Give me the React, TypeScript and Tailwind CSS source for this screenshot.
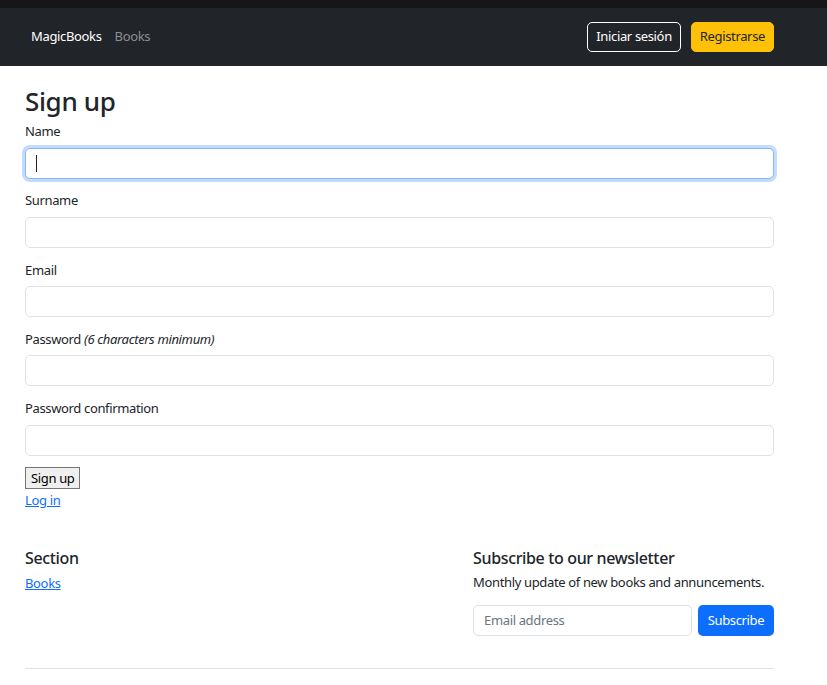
import React from 'react';

const font = { fontFamily: '"Noto Sans", "Open Sans", sans-serif' };

function Field({ label, hint, focused }: { label: string; hint?: string; focused?: boolean }) {
  return (
    <div className="mb-[12.8px]">
      <label className="mb-[6px] block text-[13px] leading-[19.5px] text-[#212529]">
        {label}
        {hint && <em className="italic"> {hint}</em>}
      </label>
      <div
        className={
          focused
            ? 'flex h-[31px] items-center rounded-[5px] border border-[#86b7fe] bg-white px-[10px] shadow-[0_0_0_3px_rgba(13,110,253,0.25)]'
            : 'h-[31px] rounded-[5px] border border-[#dee2e6] bg-white'
        }
      >
        {focused && <span className="h-[17px] w-px bg-[#212529]" />}
      </div>
    </div>
  );
}

export default function App() {
  return (
    <div className="min-h-screen bg-white tracking-[-0.35px]" style={font}>
      <div className="h-2 bg-[#161616]" />
      <nav className="flex h-[58px] items-center justify-between bg-[#212529] pl-[31px] pr-[53px]">
        <div className="flex items-center gap-[13px] text-[13px]">
          <span className="text-white">MagicBooks</span>
          <span className="text-[#8c8e91]">Books</span>
        </div>
        <div className="flex items-center gap-[10px] text-[13px]">
          <button className="h-[30px] rounded-[5px] border border-white px-[8px] text-white">Iniciar sesión</button>
          <button className="h-[30px] rounded-[5px] border border-[#ffc107] bg-[#ffc107] px-[8px] text-[#212529]">
            Registrarse
          </button>
        </div>
      </nav>

      <main className="mx-[25px] w-[749px]">
        <h2 className="mb-[5px] mt-[20px] text-[26px] font-medium leading-[31px] text-[#212529]">Sign up</h2>
        <Field label="Name" focused />
        <Field label="Surname" />
        <Field label="Email" />
        <Field label="Password" hint="(6 characters minimum)" />
        <Field label="Password confirmation" />
        <button className="-mt-px block h-[22px] border border-[#767676] bg-[#efefef] px-[5px] text-[13px] leading-[20px] text-black">
          Sign up
        </button>
        <div className="-mt-[2px]">
          <a href="#" className="text-[13px] leading-[20px] text-[#0d6efd] underline">
            Log in
          </a>
        </div>

        <footer className="mt-[37px]">
          <div className="flex">
            <div className="w-[448px]">
              <h5 className="mb-[2px] text-[16px] font-medium leading-[20px] text-[#212529]">Section</h5>
              <a href="#" className="text-[13px] leading-[20px] text-[#0d6efd] underline">
                Books
              </a>
            </div>
            <div className="flex-1">
              <h5 className="mb-[4px] text-[16px] font-medium leading-[20px] text-[#212529]">
                Subscribe to our newsletter
              </h5>
              <p className="whitespace-nowrap text-[13px] leading-[20px] text-[#212529]">
                Monthly update of new books and annuncements.
              </p>
              <div className="mt-[13px] flex gap-[6px]">
                <div className="flex h-[31px] w-[219px] items-center rounded-[5px] border border-[#dee2e6] px-[10px] text-[13px] text-[#6c757d]">
                  Email address
                </div>
                <button className="h-[31px] flex-1 rounded-[5px] bg-[#0d6efd] text-[13px] text-white">Subscribe</button>
              </div>
            </div>
          </div>
          <div className="mt-[32px] border-t border-[#dee2e6]" />
        </footer>
      </main>
    </div>
  );
}
